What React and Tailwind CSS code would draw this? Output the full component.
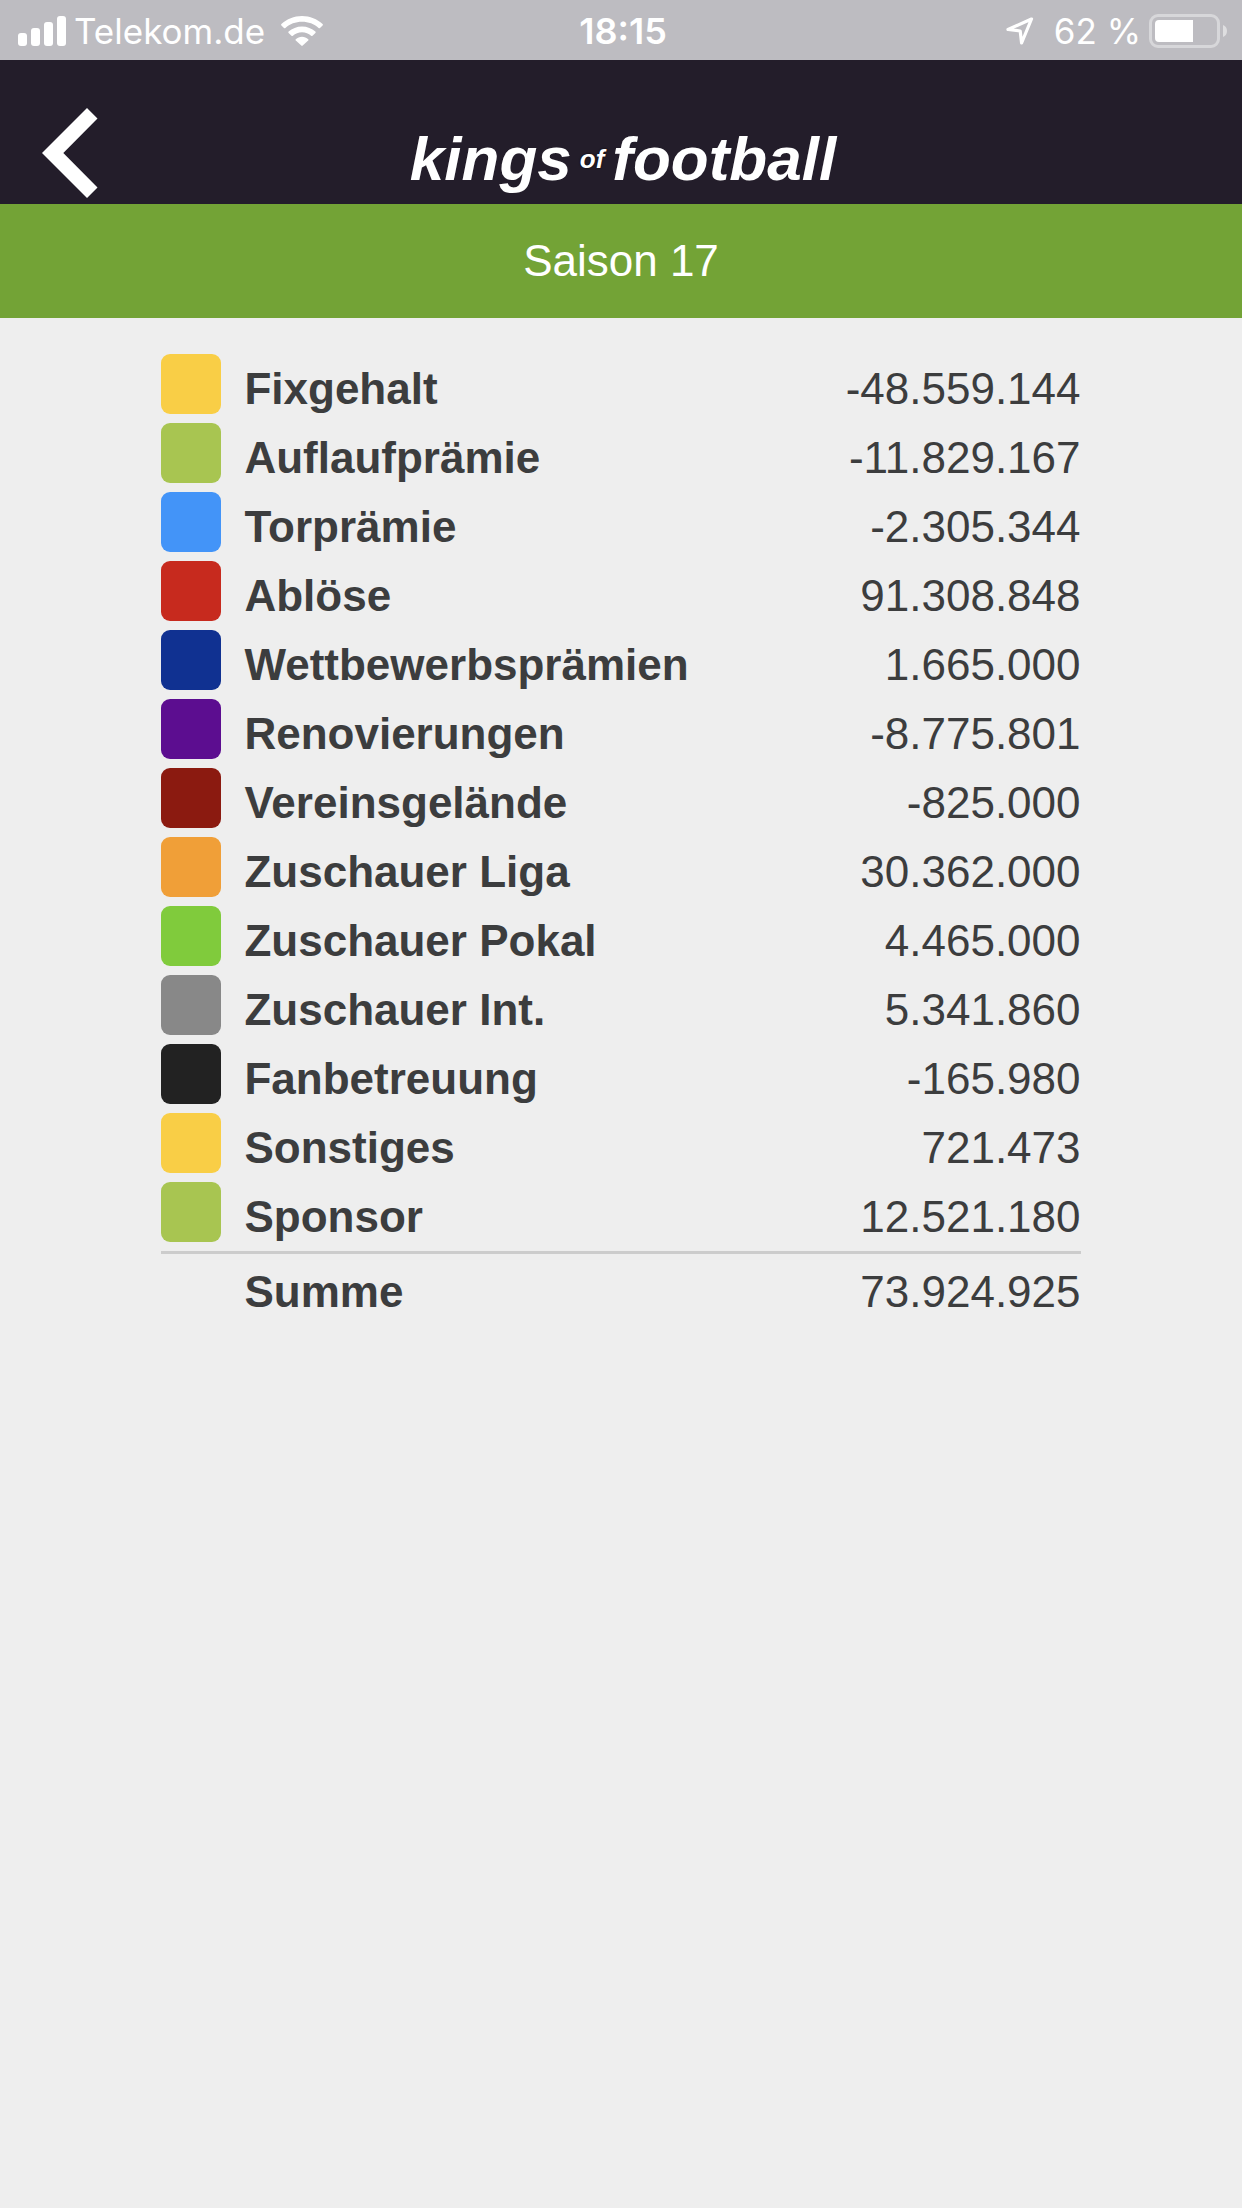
import React from 'react'

const entries = [
  { label: 'Fixgehalt', amount: '-48.559.144', color: 'bg-[#f9ce46]' },
  { label: 'Auflaufprämie', amount: '-11.829.167', color: 'bg-[#a8c551]' },
  { label: 'Torprämie', amount: '-2.305.344', color: 'bg-[#4394f8]' },
  { label: 'Ablöse', amount: '91.308.848', color: 'bg-[#c72a1e]' },
  { label: 'Wettbewerbsprämien', amount: '1.665.000', color: 'bg-[#103191]' },
  { label: 'Renovierungen', amount: '-8.775.801', color: 'bg-[#5c0d90]' },
  { label: 'Vereinsgelände', amount: '-825.000', color: 'bg-[#8b1a10]' },
  { label: 'Zuschauer Liga', amount: '30.362.000', color: 'bg-[#f09f38]' },
  { label: 'Zuschauer Pokal', amount: '4.465.000', color: 'bg-[#80cb3c]' },
  { label: 'Zuschauer Int.', amount: '5.341.860', color: 'bg-[#888888]' },
  { label: 'Fanbetreuung', amount: '-165.980', color: 'bg-[#222222]' },
  { label: 'Sonstiges', amount: '721.473', color: 'bg-[#f9ce46]' },
  { label: 'Sponsor', amount: '12.521.180', color: 'bg-[#a8c551]' }
]

function StatusBar() {
  return (
    <div className="grid h-[60px] grid-cols-[1fr_auto_1fr] items-center bg-[#bdbcc1] pl-[18px] pr-[14px] font-['Inter',sans-serif] text-[35px] leading-[62px] text-white">
      <div className="flex items-center">
        <svg width="48" height="30" viewBox="0 0 48 30" fill="currentColor" aria-hidden="true">
          <rect x="0" y="17" width="9" height="13" rx="3" />
          <rect x="13" y="12" width="9" height="18" rx="3" />
          <rect x="26" y="6" width="9" height="24" rx="3" />
          <rect x="39" y="0" width="9" height="30" rx="3" />
        </svg>
        <span className="ml-2">Telekom.de</span>
        <svg className="ml-4" width="42" height="30" viewBox="0 0 42 30" fill="currentColor" aria-hidden="true">
          <path d="M21 0C13 0 5.800 3 0.400 8Q-0.300 8.800 0.400 9.500L3 12Q3.700 12.600 4.400 12C8.800 8 14.600 5.800 21 5.800S33.200 8 37.600 12Q38.300 12.600 39 12L41.600 9.500Q42.300 8.800 41.600 8C36.200 3 29 0 21 0Z" />
          <path d="M21 10.400C15.800 10.400 11.100 12.400 7.600 15.600Q6.900 16.300 7.600 17L10.500 19.800Q11.200 20.400 11.900 19.800C14.300 17.600 17.500 16.200 21 16.200S27.700 17.600 30.100 19.800Q30.800 20.400 31.500 19.800L34.400 17Q35.100 16.300 34.400 15.600C30.900 12.400 26.200 10.400 21 10.400Z" />
          <path d="M21 20.800C18.600 20.800 16.400 21.700 14.800 23.200Q14.200 23.900 14.800 24.500L20.300 29.600Q21 30.200 21.700 29.600L27.200 24.500Q27.800 23.900 27.200 23.200C25.600 21.700 23.400 20.800 21 20.800Z" />
        </svg>
      </div>
      <time className="text-4xl leading-[62px] font-semibold">18:15</time>
      <div className="flex items-center justify-end">
        <svg width="28" height="28" viewBox="0 0 28 28" fill="none" stroke="currentColor" strokeWidth="3.200" strokeLinejoin="round" aria-hidden="true">
          <path d="M25.500 2L2 12.500L14.200 14L15.600 26Z" />
        </svg>
        <span className="ml-5">62 %</span>
        <svg className="ml-2" width="79" height="34" viewBox="0 0 79 34" aria-hidden="true">
          <rect x="1.500" y="1.500" width="68" height="31" rx="7.500" fill="none" stroke="white" strokeOpacity="0.400" strokeWidth="3" />
          <path d="M10 6H44V28H10Q6 28 6 24V10Q6 6 10 6Z" fill="white" />
          <path d="M74 11Q78 12.500 78 17T74 23Z" fill="white" fillOpacity="0.500" />
        </svg>
      </div>
    </div>
  )
}

function Header() {
  return (
    <header className="grid h-36 grid-cols-[1fr_auto_1fr] items-center bg-[#231d2a] pr-[38px] pl-[42px] text-white">
      <button type="button" aria-label="Zurück" className="mt-[42px] justify-self-start">
        <svg width="56" height="90" viewBox="0 0 56 90" fill="currentColor" aria-hidden="true">
          <path d="M45 0L55.500 10.500L21.300 45L55.500 79.500L45 90L0 45Z" />
        </svg>
      </button>
      <h1 className="mt-[54px] flex items-center gap-2 text-[62px] leading-[62px] font-bold italic">
        <span>kings</span>
        <span className="text-[26px] leading-[26px] [text-shadow:0_0_2px_black]">of</span>
        <span>football</span>
      </h1>
    </header>
  )
}

export default function App() {
  return (
    <div className="min-h-screen bg-[#eeeeee] font-['Liberation_Sans',Arial,sans-serif] text-[#3c3d3e]">
      <StatusBar />
      <Header />
      <h2 className="bg-[#73a336] py-[22px] text-center text-[44px] leading-[70px] text-white">Saison 17</h2>

      <main className="mx-auto w-[74%] pt-9">
        <table className="w-full border-separate border-spacing-0 text-[44px] leading-[69px]">
          <tbody>
            {entries.map((entry) => (
              <tr key={entry.label}>
                <td className="w-[83px] p-0 align-top">
                  <div className={`size-[60px] rounded-[9px] ${entry.color}`} />
                </td>
                <th scope="row" className="p-0 text-left font-bold">{entry.label}</th>
                <td className="p-0 text-right">{entry.amount}</td>
              </tr>
            ))}
          </tbody>
          <tfoot>
            <tr className="leading-[75px]">
              <td className="border-t-[3px] border-[#cccccc] p-0" />
              <th scope="row" className="border-t-[3px] border-[#cccccc] p-0 text-left font-bold">Summe</th>
              <td className="border-t-[3px] border-[#cccccc] p-0 text-right">73.924.925</td>
            </tr>
          </tfoot>
        </table>
      </main>
    </div>
  )
}
